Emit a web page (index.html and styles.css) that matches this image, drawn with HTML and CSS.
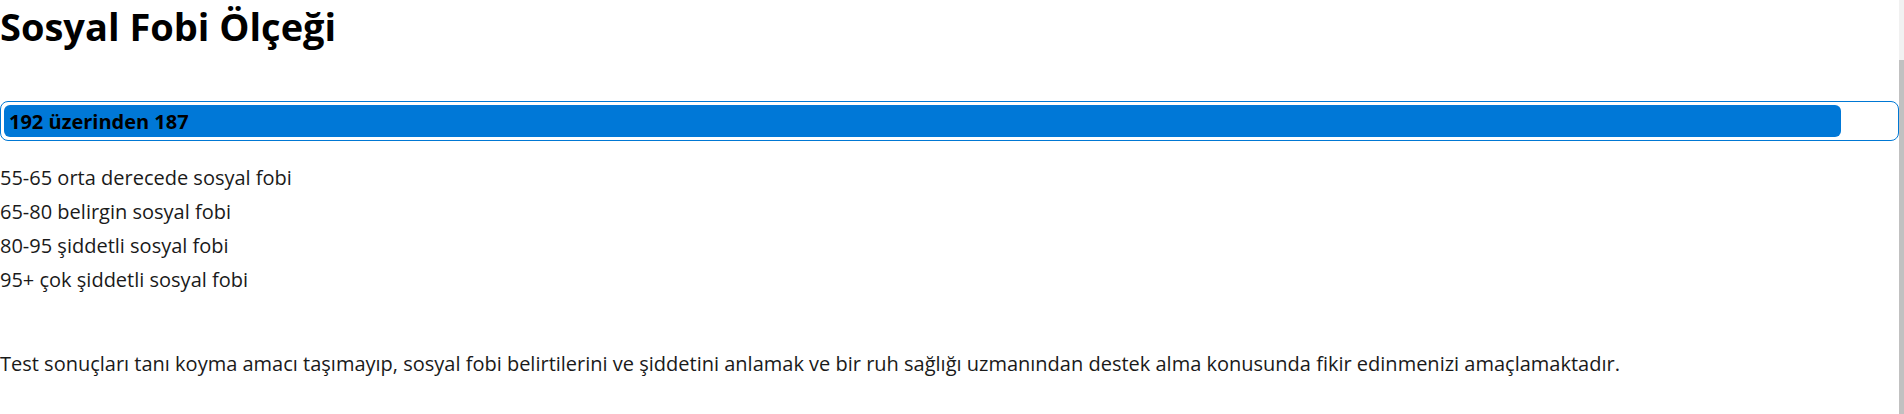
FILE: index.html
```html
<!DOCTYPE html>
<html lang="tr">
<head>
<meta charset="utf-8">
<title>Sosyal Fobi Ölçeği</title>
<link rel="stylesheet" href="styles.css">
</head>
<body>
<main class="page">
  <h1 class="title">Sosyal Fobi Ölçeği</h1>
  <div class="meter">
    <div class="meter-fill" style="width: 97.15%"></div>
    <span class="meter-label">192 üzerinden 187</span>
  </div>
  <div class="ranges">
    <p>55-65 orta derecede sosyal fobi</p>
    <p>65-80 belirgin sosyal fobi</p>
    <p>80-95 şiddetli sosyal fobi</p>
    <p>95+ çok şiddetli sosyal fobi</p>
  </div>
  <p class="note">Test sonuçları tanı koyma amacı taşımayıp, sosyal fobi belirtilerini ve şiddetini anlamak ve bir ruh sağlığı uzmanından destek alma konusunda fikir edinmenizi amaçlamaktadır.</p>
</main>
<div class="scrollbar"><div class="scrollbar-thumb"></div></div>
</body>
</html>
```

FILE: styles.css
```css
html, body {
  margin: 0;
  padding: 0;
  background: #ffffff;
  overflow: hidden;
}
body {
  font-family: "Open Sans", "Noto Sans", sans-serif;
  color: #1a1a1a;
}
.page {
  width: 1899px;
}
.title {
  margin: 0;
  font-size: 38px;
  font-weight: 700;
  line-height: 52px;
  color: #000;
}
.meter {
  position: relative;
  margin-top: 49px;
  height: 32px;
  padding: 3px;
  border: 1px solid #0078d4;
  border-radius: 8px;
}
.meter-fill {
  height: 100%;
  background: #0078d7;
  border-radius: 6px;
}
.meter-label {
  position: absolute;
  left: 8px;
  top: 0;
  bottom: 0;
  display: flex;
  align-items: center;
  font-size: 20px;
  font-weight: 700;
  color: #000;
}
.ranges {
  margin-top: 20px;
}
.ranges p {
  margin: 0;
  font-size: 20px;
  line-height: 34px;
}
.note {
  margin: 50px 0 0;
  font-size: 20px;
  line-height: 34px;
}
.scrollbar {
  position: fixed;
  top: 0;
  right: 0;
  width: 5px;
  height: 100%;
  background: #f1f1f1;
}
.scrollbar-thumb {
  margin-top: 60px;
  height: calc(100% - 60px);
  background: #c1c1c1;
}
```
